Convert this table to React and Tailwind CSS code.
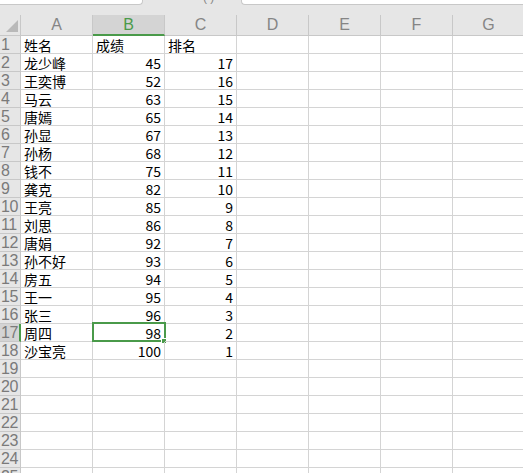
import React from "react";

const rows = [
  ["姓名", "成绩", "排名"],
  ["龙少峰", 45, 17],
  ["王奕博", 52, 16],
  ["马云", 63, 15],
  ["唐嫣", 65, 14],
  ["孙显", 67, 13],
  ["孙杨", 68, 12],
  ["钱不", 75, 11],
  ["龚克", 82, 10],
  ["王亮", 85, 9],
  ["刘思", 86, 8],
  ["唐娟", 92, 7],
  ["孙不好", 93, 6],
  ["房五", 94, 5],
  ["王一", 95, 4],
  ["张三", 96, 3],
  ["周四", 98, 2],
  ["沙宝亮", 100, 1],
];

const cols = ["A", "B", "C", "D", "E", "F", "G"];
const FONT = { fontFamily: '"Noto Sans CJK SC", "Noto Sans", sans-serif' };
const LATIN = { fontFamily: '"Liberation Sans", sans-serif' };

// ── Single cell ────────────────────────────────────────────
const Cell = ({ value, selected }) => {
  const isNum = typeof value === "number";
  return (
    <div
      className={`relative w-[72px] h-[18px] shrink-0 border-r border-b border-[#d4d4d4] flex items-center text-[14px] leading-[17px] text-black px-[3px] ${
        isNum ? "justify-end" : "justify-start"
      }`}
    >
      <span className="leading-[16px]">{value}</span>
      {selected && (
        <>
          <div className="absolute left-[-1px] top-[-2px] w-[74px] h-[20px] border-2 border-[#4a9a4a]" />
          <div className="absolute right-[-3px] bottom-[-3px] w-[6px] h-[6px] bg-[#4a9a4a] border border-white" />
        </>
      )}
    </div>
  );
};

export default function App() {
  const allRows = [...rows, ...Array(7).fill([])];

  return (
    <div className="w-[523px] h-[473px] overflow-hidden bg-white" style={FONT}>
      {/* toolbar remnants */}
      <div className="flex items-start h-[15px] bg-[#e6e6e6] overflow-hidden">
        <div className="w-[143px] h-[5px] bg-white border-b border-r border-[#c8c8c8] rounded-br-[4px]" />
        <div className="ml-[60px] -mt-[9px] text-[12px] leading-[12px] text-[#888]" style={LATIN}>
          ( )
        </div>
        <div className="ml-auto w-[282px] h-[5px] bg-white border-b border-l border-[#c8c8c8] rounded-bl-[4px]" />
      </div>

      {/* column headers */}
      <div className="flex h-[21px] bg-[#e6e6e6]" style={LATIN}>
        <div className="relative w-[21px] shrink-0 border-r border-b border-[#c8c8c8]">
          <div className="absolute right-[2px] bottom-[3px] w-0 h-0 border-l-[12px] border-l-transparent border-b-[12px] border-b-[#b9b9b9]" />
        </div>
        {cols.map((c) =>
          c === "B" ? (
            <div
              key={c}
              className="w-[72px] shrink-0 flex items-center justify-center bg-[#d4d4d4] border-r border-[#c8c8c8] border-b-2 border-b-[#4a9a4a] text-[16px] leading-[18px] text-[#4a9a4a]"
            >
              {c}
            </div>
          ) : (
            <div
              key={c}
              className="w-[72px] shrink-0 flex items-center justify-center border-r border-b border-[#c8c8c8] text-[16px] leading-[18px] text-[#858585]"
            >
              {c}
            </div>
          )
        )}
      </div>

      {/* rows */}
      {allRows.map((r, i) => {
        const n = i + 1;
        const active = n === 17;
        return (
          <div key={n} className="flex">
            <div
              className={`w-[21px] h-[18px] shrink-0 flex items-center overflow-hidden text-[16px] leading-[17px] tracking-[-0.5px] text-[#7a7a7a] border-b border-[#c8c8c8] ${
                active ? "bg-[#d4d4d4] border-r-2 border-r-[#4a9a4a]" : "bg-[#e6e6e6] border-r border-r-[#c8c8c8]"
              }`}
              style={LATIN}
            >
              <span className="pl-[1px]">{n}</span>
            </div>
            {cols.map((c, j) => (
              <Cell key={c} value={r[j]} selected={active && c === "B"} />
            ))}
          </div>
        );
      })}
    </div>
  );
}
